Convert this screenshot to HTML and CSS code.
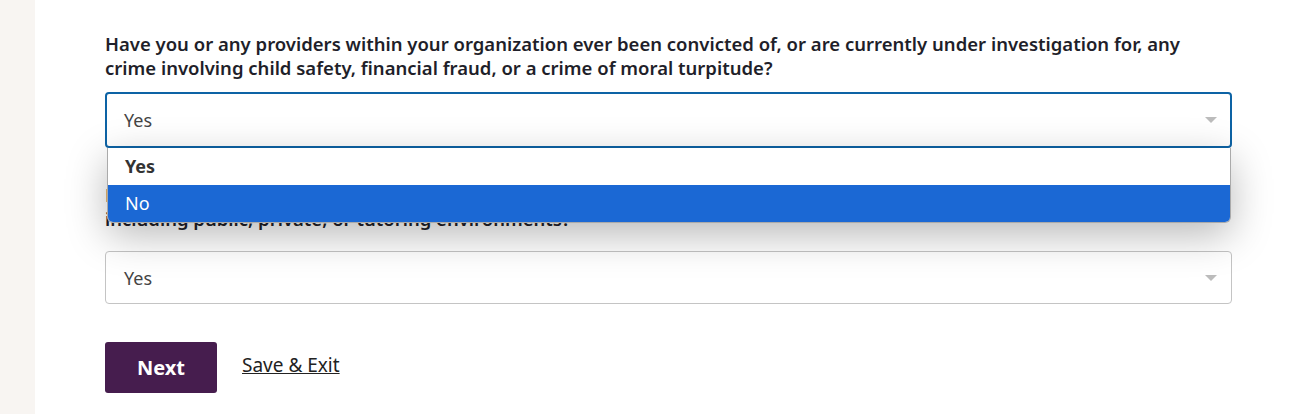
FILE: index.html
```html
<!DOCTYPE html>
<html>
  <head>
    <meta charset="utf-8">
    <title>Background check</title>
    <link rel="stylesheet" href="styles.css">
  </head>
  <body>
    <div class="page">
      <div class="side"></div>
      <div class="main">
        <div class="field">
          <p class="question">Have you or any providers within your organization ever been convicted of, or are currently under investigation for, any crime involving child safety, financial fraud, or a crime of moral turpitude?</p>
          <div class="select-wrap">
            <div class="select focus">
              <span>Yes</span>
              <i class="arrow"></i>
            </div>
            <ul class="options">
              <li class="picked">Yes</li>
              <li class="hover">No</li>
            </ul>
          </div>
        </div>

        <div class="field second">
          <p class="question">Have you or any providers within your organization ever had a complaint filed against you in an educational setting,<br>including public, private, or tutoring environments?</p>
          <div class="select-wrap">
            <div class="select">
              <span>Yes</span>
              <i class="arrow"></i>
            </div>
          </div>
        </div>

        <div class="actions">
          <a href="javascript:void(0)" class="btn">Next</a>
          <a href="javascript:void(0)" class="link">Save &amp; Exit</a>
        </div>
      </div>
    </div>
  </body>
</html>
```

FILE: styles.css
```css
*{margin: 0;padding: 0;box-sizing: border-box;}
ul {list-style: none;}
body {font-family: "Noto Sans", "Open Sans", sans-serif;color: #222;background: #fff;}

.page {display: flex;height: 414px;overflow: hidden;}
.side {width: 35px;background: #f8f5f2;flex-shrink: 0;}
.main {flex: 1;padding: 32px 69px 0 70px;}

.question {font-size: 18.5px;font-weight: 600;line-height: 24px;color: #1f1f2a;}
.field .question {margin-bottom: 12px;}
.field.second {margin-top: 35px;}
.field.second .question {margin-bottom: 20px;}

.select-wrap {position: relative;}
.select {
  height: 53px;
  border: 1px solid #c4c4c4;
  border-radius: 4px;
  display: flex;
  align-items: center;
  padding: 0 18px;
  font-size: 18px;
  color: #444;
  background: #fff;
}
.select span {flex: 1;}
.select.focus {height: 56px;border: 2px solid #0d63a5;padding: 0 17px;}
.arrow {
  width: 0;
  height: 0;
  border-left: 6px solid transparent;
  border-right: 6px solid transparent;
  border-top: 6px solid #bcbcbc;
  margin-right: -4px;
}

.options {
  position: absolute;
  left: 2px;
  right: 1px;
  top: 56px;
  z-index: 5;
  background: #fff;
  border: 1px solid #aaa;
  border-top: 0;
  border-radius: 0 0 6px 6px;
  overflow: hidden;
  box-shadow: 0 12px 40px rgba(0,0,0,0.28);
  font-size: 18px;
  color: #333;
}
.options li {height: 37px;line-height: 37px;padding-left: 17px;}
.options li.picked {font-weight: 700;}
.options li.hover {background: #1b68d4;color: #fff;}

.actions {display: flex;align-items: center;gap: 25px;margin-top: 38px;}
.btn {
  width: 112px;
  height: 51px;
  line-height: 51px;
  text-align: center;
  background: #461d4e;
  color: #fff;
  border-radius: 3px;
  font-size: 20px;
  font-weight: 700;
  text-decoration: none;
}
.link {font-size: 19px;color: #222;text-decoration: underline;margin-top: -6px;}
```
